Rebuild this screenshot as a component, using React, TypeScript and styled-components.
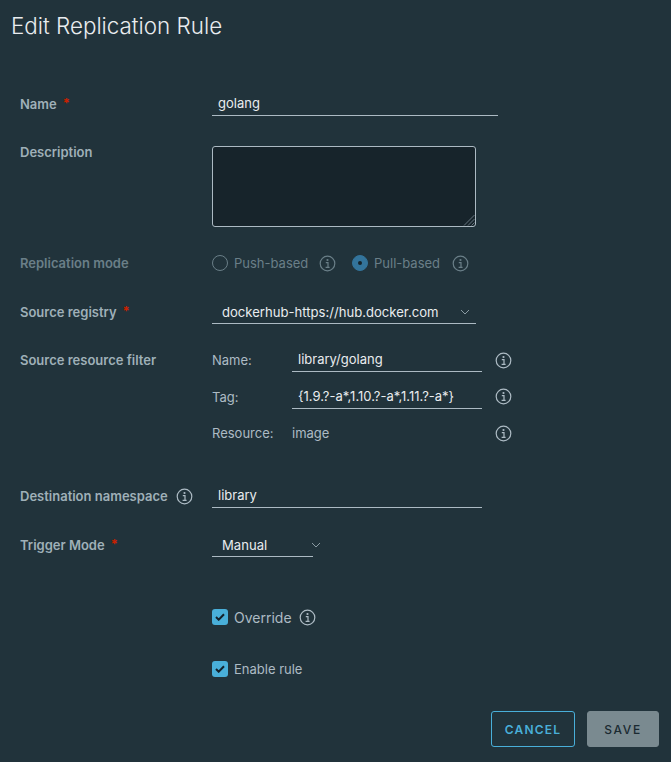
import React from 'react';
import styled, { createGlobalStyle } from 'styled-components';

const GlobalStyle = createGlobalStyle`
  html, body {
    margin: 0;
    padding: 0;
    background: #21333b;
  }
  body {
    font-family: Inter, "Open Sans", "Liberation Sans", sans-serif;
    -webkit-font-smoothing: antialiased;
  }
`;

const Modal = styled.div`
  width: 671px;
  height: 762px;
  overflow: hidden;
  box-sizing: border-box;
  background: #21333b;
  display: flex;
  flex-direction: column;
`;

const Title = styled.h3`
  margin: 14px 0 0 11px;
  height: 24px;
  font-size: 22.4px;
  line-height: 24px;
  font-weight: 300;
  color: #e9ecef;
`;

const Form = styled.form`
  margin: 54px 0 0 20px;
  display: flex;
  flex-direction: column;
`;

const Row = styled.div<{ $gap: number; $height: number }>`
  display: grid;
  grid-template-columns: 192px 1fr;
  margin-top: ${(p) => p.$gap}px;
  min-height: ${(p) => p.$height}px;
`;

const Label = styled.label<{ $muted?: boolean; $raised?: boolean }>`
  display: flex;
  align-items: center;
  gap: 8px;
  height: 24px;
  margin-top: ${(p) => (p.$raised ? -6 : 0)}px;
  font-size: 13px;
  font-weight: 600;
  color: ${(p) => (p.$muted ? '#6a7f88' : '#9fb0b8')};
`;

const Star = styled.span`
  color: #c92100;
  font-size: 13px;
  font-weight: 700;
  margin: -3px 0 0 -2px;
`;

const TextInput = styled.div<{ $width: number }>`
  box-sizing: border-box;
  width: ${(p) => p.$width}px;
  height: 24px;
  padding: 0 6px;
  border-bottom: 1px solid #acbac3;
  font-size: 13px;
  line-height: 23px;
  color: #e9ecef;
  white-space: nowrap;
`;

const TextArea = styled.div`
  box-sizing: border-box;
  position: relative;
  width: 264px;
  height: 81px;
  background: #17242b;
  border: 1px solid #acbac3;
  border-radius: 3px;
`;

const Grip = styled.svg`
  position: absolute;
  right: 0;
  bottom: 0;
  width: 12px;
  height: 12px;
`;

const Select = styled.div<{ $width: number }>`
  box-sizing: border-box;
  width: ${(p) => p.$width}px;
  height: 24px;
  padding: 0 6px 0 10px;
  display: flex;
  align-items: center;
  justify-content: space-between;
  border-bottom: 1px solid #acbac3;
  font-size: 13.1px;
  color: #e9ecef;
  white-space: nowrap;
`;

const Chevron = styled.svg<{ $overhang?: number }>`
  width: 10px;
  height: 10px;
  flex: none;
  margin-right: ${(p) => -(p.$overhang ?? 0)}px;
  fill: none;
  stroke: #8a9ba3;
  stroke-width: 1;
`;

const Icon = styled.svg<{ $dim?: boolean }>`
  width: 17px;
  height: 17px;
  flex: none;
  color: ${(p) => (p.$dim ? '#6a7f88' : '#adbbc4')};
`;

const RadioGroup = styled.div`
  display: flex;
  align-items: center;
  height: 24px;
  font-size: 13px;
  color: #6a7f88;
`;

const RadioCircle = styled.span<{ $checked?: boolean }>`
  box-sizing: border-box;
  width: 16px;
  height: 16px;
  margin-right: 6px;
  margin-left: ${(p) => (p.$checked ? 16 : 0)}px;
  border-radius: 50%;
  display: flex;
  align-items: center;
  justify-content: center;
  border: 1px solid ${(p) => (p.$checked ? '#33749b' : '#6a7f88')};
  background: ${(p) => (p.$checked ? '#33749b' : 'transparent')};
  &::after {
    content: '';
    display: ${(p) => (p.$checked ? 'block' : 'none')};
    width: 4px;
    height: 4px;
    border-radius: 50%;
    background: #17242b;
  }
`;

const RadioText = styled.span<{ $width: number }>`
  width: ${(p) => p.$width}px;
`;

const FilterList = styled.div`
  display: flex;
  flex-direction: column;
  gap: 12.5px;
`;

const FilterRow = styled.div`
  display: grid;
  grid-template-columns: 80px 190px 17px;
  align-items: center;
  height: 24px;
  font-size: 13px;
  color: #adbbc4;
`;

const FilterIcon = styled.div`
  display: flex;
  justify-content: flex-end;
  margin-right: -13px;
`;

const CheckRow = styled.div<{ $size: number }>`
  display: flex;
  align-items: center;
  gap: 7px;
  height: 24px;
  font-size: ${(p) => p.$size}px;
  color: #adbbc4;
`;

const CheckBox = styled.span`
  width: 16px;
  height: 16px;
  margin-right: -1px;
  border-radius: 3px;
  background: #49afd9;
  display: flex;
  align-items: center;
  justify-content: center;
`;

const Footer = styled.div`
  margin: 30px 12px 0 0;
  display: flex;
  justify-content: flex-end;
  gap: 12px;
`;

const Button = styled.button<{ $primary?: boolean }>`
  box-sizing: border-box;
  height: 36px;
  width: ${(p) => (p.$primary ? 72 : 84)}px;
  padding: 0;
  border-radius: 3px;
  border: 1px solid ${(p) => (p.$primary ? '#7a8a90' : '#49afd9')};
  background: ${(p) => (p.$primary ? '#7a8a90' : 'transparent')};
  color: ${(p) => (p.$primary ? '#1b2a32' : '#49afd9')};
  font-family: inherit;
  font-size: 12px;
  font-weight: ${(p) => (p.$primary ? 500 : 600)};
  letter-spacing: ${(p) => (p.$primary ? 1.6 : 1.2)}px;
`;

const Info = ({ dim }: { dim?: boolean }) => (
  <Icon $dim={dim} viewBox="0 0 17 17">
    <circle cx="8.5" cy="8.5" r="7.3" fill="none" stroke="currentColor" strokeWidth="1.2" />
    <circle cx="8.5" cy="5" r="1.1" fill="currentColor" />
    <path d="M6.8 7.6h2.2v4.6M6.6 12.4h4" fill="none" stroke="currentColor" strokeWidth="1.2" />
  </Icon>
);

const Caret = ({ overhang }: { overhang?: number }) => (
  <Chevron $overhang={overhang} viewBox="0 0 10 10">
    <path d="M1 3l4 4 4-4" />
  </Chevron>
);

const Check = () => (
  <svg width="10" height="8" viewBox="0 0 10 8">
    <path d="M1 4l2.7 2.7L9 1.2" fill="none" stroke="#14212a" strokeWidth="2" />
  </svg>
);

export default function App() {
  return (
    <Modal>
      <GlobalStyle />
      <Title>Edit Replication Rule</Title>
      <Form>
        <Row $gap={0} $height={24}>
          <Label>
            Name <Star>*</Star>
          </Label>
          <TextInput $width={286}>golang</TextInput>
        </Row>
        <Row $gap={30} $height={81}>
          <Label $raised>Description</Label>
          <TextArea>
            <Grip viewBox="0 0 12 12">
              <path d="M11.5 1L1 11.5M11.5 5L5 11.5M11.5 8.5L8.5 11.5" stroke="#7c8c94" strokeWidth="0.8" fill="none" />
            </Grip>
          </TextArea>
        </Row>
        <Row $gap={24} $height={24}>
          <Label $muted>Replication mode</Label>
          <RadioGroup>
            <RadioCircle />
            <RadioText $width={85}>Push-based</RadioText>
            <Info dim />
            <RadioCircle $checked />
            <RadioText $width={78}>Pull-based</RadioText>
            <Info dim />
          </RadioGroup>
        </Row>
        <Row $gap={25} $height={24}>
          <Label>
            Source registry <Star>*</Star>
          </Label>
          <Select $width={264}>
            dockerhub-https://hub.docker.com
            <Caret />
          </Select>
        </Row>
        <Row $gap={24} $height={97}>
          <Label>Source resource filter</Label>
          <FilterList>
            <FilterRow>
              <span>Name:</span>
              <TextInput $width={190}>library/golang</TextInput>
              <FilterIcon><Info /></FilterIcon>
            </FilterRow>
            <FilterRow>
              <span>Tag:</span>
              <TextInput $width={190}>{'{1.9.?-a*,1.10.?-a*,1.11.?-a*}'}</TextInput>
              <FilterIcon><Info /></FilterIcon>
            </FilterRow>
            <FilterRow>
              <span>Resource:</span>
              <span>image</span>
              <FilterIcon><Info /></FilterIcon>
            </FilterRow>
          </FilterList>
        </Row>
        <Row $gap={39} $height={24}>
          <Label>
            Destination namespace <Info />
          </Label>
          <TextInput $width={270}>library</TextInput>
        </Row>
        <Row $gap={25} $height={24}>
          <Label>
            Trigger Mode <Star>*</Star>
          </Label>
          <Select $width={101}>
            Manual
            <Caret overhang={14} />
          </Select>
        </Row>
        <Row $gap={48} $height={24}>
          <span />
          <CheckRow $size={14}>
            <CheckBox><Check /></CheckBox>
            Override
            <Info />
          </CheckRow>
        </Row>
        <Row $gap={28} $height={24}>
          <span />
          <CheckRow $size={13}>
            <CheckBox><Check /></CheckBox>
            Enable rule
          </CheckRow>
        </Row>
      </Form>
      <Footer>
        <Button type="button">CANCEL</Button>
        <Button type="button" $primary>SAVE</Button>
      </Footer>
    </Modal>
  );
}
